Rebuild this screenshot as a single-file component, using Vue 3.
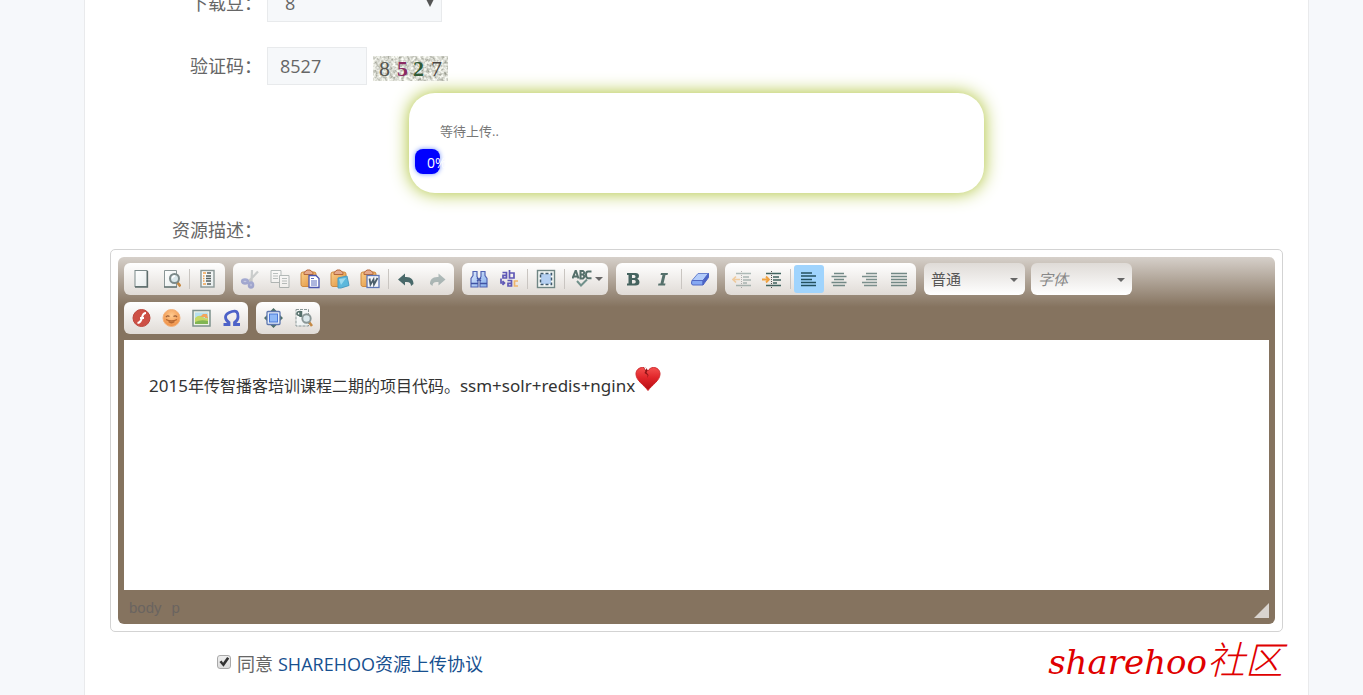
<script setup>
import { ref } from 'vue'

const points = ref('8')
const captcha = ref('8527')
const agreed = ref(true)

const row1 = [
  [{ icon: 'page', label: '新建' }, { icon: 'preview', label: '预览' }, { sep: true }, { icon: 'template', label: '模板' }],
  [
    { icon: 'cut', label: '剪切', off: true },
    { icon: 'copy', label: '复制', off: true },
    { icon: 'paste', label: '粘贴' },
    { icon: 'pastetext', label: '粘贴为无格式文本' },
    { icon: 'pasteword', label: '从 MS Word 粘贴' },
    { sep: true },
    { icon: 'undo', label: '撤消' },
    { icon: 'redo', label: '重做', off: true }
  ],
  [
    { icon: 'find', label: '查找' },
    { icon: 'replace', label: '替换' },
    { sep: true },
    { icon: 'selectall', label: '全选' },
    { sep: true },
    { icon: 'spell', label: '拼写检查', wide: true }
  ],
  [{ icon: 'bold', label: '加粗' }, { icon: 'italic', label: '倾斜' }, { sep: true }, { icon: 'eraser', label: '清除格式' }],
  [
    { icon: 'outdent', label: '减少缩进量', off: true },
    { icon: 'indent', label: '增加缩进量' },
    { sep: true },
    { icon: 'left', label: '左对齐', active: true },
    { icon: 'center', label: '居中' },
    { icon: 'right', label: '右对齐' },
    { icon: 'justify', label: '两端对齐' }
  ]
]
const row2 = [
  [
    { icon: 'flash', label: 'Flash' },
    { icon: 'smiley', label: '表情符' },
    { icon: 'image', label: '图像' },
    { icon: 'omega', label: '特殊符号' }
  ],
  [{ icon: 'maximize', label: '全屏' }, { icon: 'blocks', label: '显示区块' }]
]
const rows = [row1, row2]
</script>

<template>
  <div class="page">
    <svg class="defs" aria-hidden="true">
      <defs>
        <linearGradient id="gPaper" x1="0" y1="0" x2="1" y2="1">
          <stop offset="0" stop-color="#ffffff" />
          <stop offset="1" stop-color="#e6ecec" />
        </linearGradient>
        <linearGradient id="gBoard" x1="0" y1="0" x2="1" y2="1">
          <stop offset="0" stop-color="#fbd08a" />
          <stop offset="1" stop-color="#dd8c38" />
        </linearGradient>
        <linearGradient id="gBlue" x1="0" y1="0" x2="1" y2="1">
          <stop offset="0" stop-color="#dfeafc" />
          <stop offset="1" stop-color="#84aeec" />
        </linearGradient>
        <linearGradient id="gHeart" x1="0" y1="0" x2="0" y2="1">
          <stop offset="0" stop-color="#f4504e" />
          <stop offset="0.45" stop-color="#e0252a" />
          <stop offset="1" stop-color="#b30c12" />
        </linearGradient>
        <radialGradient id="gFace" cx="0.5" cy="0.35" r="0.65">
          <stop offset="0" stop-color="#ffcb90" />
          <stop offset="1" stop-color="#ee8e44" />
        </radialGradient>
        <filter id="grain" x="0" y="0" width="1" height="1">
          <feTurbulence type="fractalNoise" baseFrequency="0.35" numOctaves="2" seed="7" />
          <feColorMatrix values="1.2 0 0 0 0.1  1.2 0 0 0 0.11  1.2 0 0 0 0.05  0 0 0 0 1" />
        </filter>
      </defs>
      <symbol id="page" viewBox="0 0 20 20">
        <rect x="4" y="1.500" width="12" height="16" fill="url(#gPaper)" stroke="#7b8a8a" />
        <path d="M4 18h12.500V2" fill="none" stroke="#5c6c6b" stroke-width="1.300" />
      </symbol>
      <symbol id="preview" viewBox="0 0 20 20">
        <path d="M3.500 1.500h12v16.500h-12z" fill="url(#gPaper)" stroke="#8a9696" />
        <path d="M3 18h13" stroke="#5c6c6b" stroke-width="1.300" />
        <path d="M16 13l3.500 4.500" stroke="#c58a45" stroke-width="2.800" />
        <circle cx="13.500" cy="9.500" r="4.500" fill="#d9e7ea" stroke="#7b8989" stroke-width="2" />
        <path d="M11.500 9.500a2.500 2.500 0 0 1 2.500-2.500" stroke="#fff" stroke-width="1.300" fill="none" />
      </symbol>
      <symbol id="template" viewBox="0 0 20 20">
        <rect x="3" y="1.500" width="13" height="16.500" fill="url(#gPaper)" stroke="#8a9796" stroke-width="1.400" />
        <path d="M5 4h3M5 7h1.500M5 9.500h1.500M5 12h1.500M5 15h3" stroke="#f0a350" stroke-width="1.500" />
        <path d="M9 4h4M8 7h5M8 9.500h5M8 12h5M9 15h4" stroke="#56605f" stroke-width="1.300" />
      </symbol>
      <symbol id="cut" viewBox="0 0 20 20">
        <path d="M18 2.500L8 13M12 1l-.5 12" stroke="#8d9597" stroke-width="2.200" />
        <ellipse cx="5" cy="12.500" rx="2.800" ry="2" fill="#8c98dc" stroke="#3446ad" stroke-width="2.600" />
        <ellipse cx="11" cy="16" rx="2" ry="2.500" fill="#8c98dc" stroke="#3446ad" stroke-width="2.600" />
      </symbol>
      <symbol id="copy" viewBox="0 0 20 20">
        <path d="M1 1.500h10v12H1z" fill="#fff" stroke="#566" />
        <path d="M3 4.500h5M3 7h5M3 9.500h5" stroke="#677" />
        <path d="M9.500 6.500h9.500v12H9.500z" fill="#fff" stroke="#566" />
        <path d="M12 9.500h5M12 12h5M12 14.500h5" stroke="#677" />
      </symbol>
      <symbol id="board" viewBox="0 0 20 20">
        <rect x="1" y="3" width="15" height="14.500" rx="2" fill="url(#gBoard)" stroke="#d08a3e" />
        <path d="M4 5.500V3.500L7 1h3l3 2.500v2z" fill="#e5a98a" stroke="#b5683a" />
      </symbol>
      <symbol id="paste" viewBox="0 0 20 20">
        <use href="#board" />
        <path d="M9 6.500h7l3 3v9H9z" fill="#fff" stroke="#4a56ae" stroke-width="1.300" />
        <path d="M11 9.500h3M11 12h6M11 14h6M11 16h6" stroke="#5b6cbd" />
      </symbol>
      <symbol id="pastetext" viewBox="0 0 20 20">
        <use href="#board" />
        <path d="M8 9l9-2 2 9.500L11 19H8z" fill="#5cb8dc" stroke="#4a9cc2" />
        <path d="M9 10l7-1-5 7z" fill="#9adaee" />
      </symbol>
      <symbol id="pasteword" viewBox="0 0 20 20">
        <use href="#board" />
        <rect x="7" y="6.500" width="12" height="12" fill="#f4f6fb" stroke="#5f78b8" stroke-width="1.300" />
        <path d="M9.500 9.500l1 6 3-5 .5 5 3.500-6.500" fill="none" stroke="#4b5f6c" stroke-width="1.800" />
      </symbol>
      <symbol id="undo" viewBox="0 0 20 20">
        <path d="M1 10.500l7-6v3.500c6-.5 8.500 2.500 8.500 7l-2.500 2c0-3.500-2-4.500-6-4v3.500z" fill="#49696a" />
      </symbol>
      <symbol id="redo" viewBox="0 0 20 20">
        <path d="M18.500 10.500l-7-6v3.500C5.500 7.500 3 10.500 3 15l2.500 2c0-3.500 2-4.500 6-4v3.500z" fill="#49696a" />
      </symbol>
      <symbol id="find" viewBox="0 0 20 20">
        <path d="M4 2.500h4v5l1 2v8.500H2V9.500l2-3zM12 2.500h4v4l2 3V18h-7V9.500l1-2z" fill="url(#gBlue)" stroke="#5365b4" stroke-width="1.200" />
        <path d="M8 9l4 3M8 12l4-3M2 14.500h7M11 14.500h7" stroke="#4053a4" stroke-width="1.500" />
      </symbol>
      <symbol id="replace" viewBox="0 0 20 20">
        <g fill="none" stroke="#5f58b6" stroke-width="1.700">
          <path d="M3.500 3.500h4v5.500H4V6.300h3.500M10.500 1v8H15V4h-4.500" />
          <path d="M8.500 11.500h4v5.500H9v-2.700h3.500M2 9.500v4.500h4M3.500 12l2 2-2 2" />
        </g>
        <path d="M19 12h-3.500v5H19" fill="none" stroke="#efb56c" stroke-width="1.700" />
      </symbol>
      <symbol id="selectall" viewBox="0 0 20 20">
        <rect x="1.500" y="1.500" width="17" height="17" fill="#f3f7f5" stroke="#708684" stroke-width="1.400" />
        <rect x="5" y="5" width="10" height="10" fill="#b5d0f2" />
        <rect x="4.500" y="4.500" width="11" height="11" fill="none" stroke="#40596c" stroke-width="1.500" stroke-dasharray="3 2" />
      </symbol>
      <symbol id="spell" viewBox="0 0 20 20">
        <g fill="none" stroke="#55706b" stroke-width="2">
          <path d="M.5 9.500L3.500 2h.5l2.500 7.500M1.500 7.500h4M8.500 2v7.500M7.500 2h3.500q2.500 1.700 0 3.500H8.500H11q2.500 2 0 4H7.500M19.500 2.500H16q-2 0-2 3.300t2 3.400h3.500" />
          <path d="M5 12l4 4.500 6-6" stroke="#71918b" />
        </g>
      </symbol>
      <symbol id="bold" viewBox="0 0 20 20">
        <path fill-rule="evenodd" d="M4 4h8.500q3.500 0 3.500 3 0 2-1.800 2.800Q16.500 10.500 16.500 13q0 3.500-4 3.500H4v-2h1.500V6H4zm5 2v3h2q1.500 0 1.500-1.500T11 6zm0 5v3.500h2.200q1.600 0 1.600-1.700T11.200 11z" fill="#45635f" />
      </symbol>
      <symbol id="italic" viewBox="0 0 20 20">
        <path d="M8 4h7l-.5 2h-2l-2 8.500h2l-.5 2H5l.5-2h2l2-8.500h-2z" fill="#55706b" />
      </symbol>
      <symbol id="eraser" viewBox="0 0 20 20">
        <path d="M8 4.500h10.500L13 11.500H2z" fill="#b3ccfa" stroke="#6a83cf" />
        <path d="M2 11.500h11v4.500H3q-1.500 0-1.500-2z" fill="#86a8f2" stroke="#5069c5" />
        <path d="M13 11.500l5.500-7v4L13 16z" fill="#4a63c6" stroke="#4c64c4" />
      </symbol>
      <symbol id="outdent" viewBox="0 0 20 20">
        <path d="M4 4.500h15M11 8h6M11 11h8M11 14h4M4 16.500h15" stroke="#40635f" stroke-width="1.500" />
        <path d="M9.500 2v17" stroke="#555" stroke-dasharray="1 1" />
        <path d="M8 10.500H1M4 7.500l-3 3 3 3" fill="none" stroke="#ef9a31" stroke-width="1.700" />
      </symbol>
      <symbol id="indent" viewBox="0 0 20 20">
        <path d="M4 4.500h15M11 8h6M11 11h8M11 14h4M4 16.500h15" stroke="#40635f" stroke-width="1.500" />
        <path d="M9.500 2v17" stroke="#555" stroke-dasharray="1 1" />
        <path d="M0 10.500h7M4 7.500l3 3-3 3" fill="none" stroke="#efa140" stroke-width="1.800" />
      </symbol>
      <symbol id="left" viewBox="0 0 20 20">
        <path d="M2 4h11M2 7h15M2 10.500h11M2 13.500h15M2 16.500h15" stroke="#23505f" stroke-width="1.500" />
      </symbol>
      <symbol id="center" viewBox="0 0 20 20">
        <path d="M5 4.500h10M2.500 7.500h15M5 10.500h10M2.500 13.500h15M4 16.500h12" stroke="#728885" stroke-width="1.500" />
      </symbol>
      <symbol id="right" viewBox="0 0 20 20">
        <path d="M7 4.500h11M3 7.500h15M7 10.500h11M3 13.500h15M5 16.500h13" stroke="#7b8f8c" stroke-width="1.500" />
      </symbol>
      <symbol id="justify" viewBox="0 0 20 20">
        <path d="M2 4.500h16M2 7.500h16M2 10.500h16M2 13.500h16M2 16.500h16" stroke="#728885" stroke-width="1.700" />
      </symbol>
      <symbol id="flash" viewBox="0 0 20 20">
        <circle cx="10.500" cy="10" r="8.500" fill="#cd5045" stroke="#bc463c" />
        <path d="M15 5q-3 0-4 4.500-1 5-4.500 5.500M9 10h4" fill="none" stroke="#fff" stroke-width="2" />
      </symbol>
      <symbol id="smiley" viewBox="0 0 20 20">
        <circle cx="10.500" cy="10" r="8.500" fill="url(#gFace)" stroke="#f3b27a" />
        <path d="M5 9q1.500-2 3.500-.5M12.500 8.500q2-1.500 3.500.5" fill="none" stroke="#9b5f38" stroke-width="1.300" />
        <path d="M5 11.500q5.500 3 11 0M7.500 13.500q3 2.500 6 0" fill="none" stroke="#b5662f" stroke-width="1.300" />
      </symbol>
      <symbol id="image" viewBox="0 0 20 20">
        <rect x="2" y="2.500" width="17" height="15.500" fill="#eef2e6" stroke="#7d918c" stroke-width="1.500" />
        <path d="M4 4.500h13v8H4z" fill="#b7e0ee" />
        <path d="M4 10q4-4 8-1t5 0v7H4z" fill="#c5d865" />
        <path d="M4 14q6-3 13-1v3H4z" fill="#80b553" />
        <path d="M9 9l3-3h4l1 4h-3V9z" fill="#f2a65a" />
      </symbol>
      <symbol id="omega" viewBox="0 0 20 20">
        <path d="M2.500 16.500H8v-2Q4.500 12.500 4.500 9T11 3.500 17 9q0 3.500-3.500 5.500v2H19" fill="none" stroke="#4d62c8" stroke-width="2.800" />
      </symbol>
      <symbol id="maximize" viewBox="0 0 20 20">
        <path d="M10.500 0l3 3h-6zM10.500 20l3-3h-6zM1 10l3-3v6zM20 10l-3-3v6z" fill="#4d6f68" />
        <rect x="4" y="3.500" width="13" height="13" rx="1" fill="#e6eefa" stroke="#5f77ae" stroke-width="1.300" />
        <rect x="6.500" y="6" width="8" height="8" fill="#8fb8f6" stroke="#4b78d8" />
      </symbol>
      <symbol id="blocks" viewBox="0 0 20 20">
        <path d="M3 1.500h12.500V18H3z" fill="url(#gPaper)" stroke="#8a9696" stroke-dasharray="3 1" />
        <path d="M8.500 3v6M7 9V3.500Q4 3.500 4 5.500t3 2" fill="none" stroke="#55706b" stroke-width="1.500" />
        <path d="M16 14l3 4" stroke="#c58a45" stroke-width="2.600" />
        <circle cx="13.500" cy="10.500" r="4.200" fill="#dce9ec" stroke="#8a9797" stroke-width="1.900" />
      </symbol>
    </svg>

    <main class="card">
      <div class="row">
        <label class="label" for="points">下载豆：</label>
        <span class="pick">
          <select id="points" v-model="points" class="field points">
            <option>8</option>
          </select>
          <span class="tri"></span>
        </span>
      </div>
      <div class="row code-row">
        <label class="label" for="captcha">验证码：</label>
        <input id="captcha" v-model="captcha" class="field code" type="text" />
        <svg class="captcha" viewBox="0 0 75 25" role="img" aria-label="8527">
          <rect width="75" height="25" fill="#c9cbbf" />
          <rect width="75" height="25" filter="url(#grain)" />
          <text x="6" y="20" fill="#55564f">8</text>
          <text x="24" y="20" fill="#8a2a62" class="strong">5</text>
          <text x="40" y="20" fill="#2f5a35" class="strong">2</text>
          <text x="58" y="20" fill="#4b4540">7</text>
        </svg>
      </div>

      <section class="upload">
        <p class="wait">等待上传..</p>
        <div class="bar">0%</div>
      </section>

      <div class="row desc-row"><span id="desc" class="label">资源描述：</span></div>

      <div class="editor">
        <div class="chrome">
          <div class="toolbar">
            <div v-for="(row, r) in rows" :key="r" class="tools">
              <div v-for="(group, g) in row" :key="g" class="group">
                <template v-for="(t, i) in group" :key="i">
                  <span v-if="t.sep" class="sep"></span>
                  <button
                    v-else
                    type="button"
                    class="tool"
                    :class="{ active: t.active, off: t.off, wide: t.wide }"
                    :title="t.label"
                    :aria-label="t.label"
                  >
                    <svg class="icon"><use :href="'#' + t.icon" /></svg>
                    <span v-if="t.wide" class="caret"></span>
                  </button>
                </template>
              </div>
              <div v-if="r === 0" class="combos">
                <span class="combo">
                  <select aria-label="格式"><option>普通</option></select>
                  <span class="caret"></span>
                </span>
                <span class="combo">
                  <select class="muted" aria-label="字体"><option>字体</option></select>
                  <span class="caret"></span>
                </span>
              </div>
            </div>
          </div>
          <div class="content" contenteditable="true" role="textbox" aria-labelledby="desc">
            <p><span class="latin">2015</span>年传智播客培训课程二期的项目代码。<span class="latin">ssm+solr+redis+nginx</span><svg class="heart" viewBox="0 0 26 26">
              <path d="M13 24.500C9 19 1 14.500 1 8 1 4 4 1.500 7.500 1.500c2.500 0 4.500 1.500 5.500 3.500 1-2 3-3.500 5.500-3.500C22 1.500 25 4 25 8c0 6.500-8 11-12 16.500z" fill="url(#gHeart)" stroke="#d0282c" />
              <path d="M8.500 1l2 4-1 2 3 2 0 3 1-3-2-2.500 1-2L11 2z" fill="#8d1417" />
              <path d="M8.500 0l3 2.500-1 1.500z" fill="#fff" />
            </svg></p>
          </div>
          <div class="status">
            <a href="#body">body</a>
            <a href="#p">p</a>
            <span class="grip"></span>
          </div>
        </div>
      </div>

      <footer class="foot">
        <input id="agree" v-model="agreed" type="checkbox" />
        <label for="agree">同意</label>
        <a class="terms" href="#terms">SHAREHOO资源上传协议</a>
        <span class="mark">sharehoo<span class="mark-cn">社区</span></span>
      </footer>
    </main>
  </div>
</template>

<style>
body {
  background: #f6f8fb;
}
</style>

<style scoped>
.page {
  display: flex;
  flex-direction: column;
  min-height: 100vh;
  overflow: hidden;
  background: #f6f8fb;
  color: #666;
  font: 18px/24px "Open Sans", "Noto Sans CJK SC", sans-serif;
}
.page * {
  box-sizing: border-box;
}
.defs {
  position: absolute;
  width: 0;
  height: 0;
}
.card {
  flex: 1;
  margin: -16px 54px 0 84px;
  padding: 0 25px;
  background: #fff;
  border: solid #e9eaec;
  border-width: 0 1px;
}
.row {
  display: flex;
  align-items: center;
  gap: 5px;
}
.label {
  width: 152px;
  text-align: right;
  white-space: nowrap;
}
.field {
  height: 38px;
  margin: 0;
  padding: 0 12px;
  border: 1px solid #e8eaec;
  border-radius: 0;
  background: #f6f8fa;
  color: #666;
  font: inherit;
  appearance: none;
}
.pick {
  position: relative;
}
.points {
  display: block;
  width: 175px;
  padding-left: 17px;
}
.tri {
  position: absolute;
  top: 15px;
  right: 8px;
  border: solid transparent;
  border-width: 8px 4px 0;
  border-top-color: #555;
  pointer-events: none;
}
.code-row {
  margin-top: 25px;
}
.code {
  width: 100px;
}
.captcha {
  width: 75px;
  height: 25px;
  margin: 5px 0 0 1px;
  font: 22px "Liberation Serif", serif;
}
.strong {
  font-weight: 700;
}
.upload {
  width: 575px;
  max-width: 100%;
  height: 100px;
  margin: 8px auto 0;
  padding: 28px 6px 0;
  border-radius: 26px;
  box-shadow: 0 0 18px #a9bf2c;
  color: #777;
  font-size: 13px;
}
.wait {
  margin: 0 0 8px 25px;
  line-height: 20px;
}
.bar {
  width: 25px;
  height: 25px;
  padding-left: 12px;
  border-radius: 8px;
  background: #00f;
  box-shadow: 0 0 5px #6d8cff;
  color: #fff;
  font-size: 14px;
  line-height: 27px;
}
.desc-row {
  margin-top: 25px;
}
.editor {
  margin-top: 7px;
  padding: 7px;
  border: 1px solid #d3d3d3;
  border-radius: 5px;
}
.chrome {
  padding: 6px 6px 0;
  border-radius: 6px;
  background: #85735f linear-gradient(#d6d0ca, #85735f) no-repeat 0 0 / 100% 50px;
}
.toolbar {
  display: flex;
  flex-direction: column;
  gap: 7px;
  padding-bottom: 6px;
}
.tools {
  display: flex;
  gap: 8px;
}
.group {
  display: flex;
  align-items: center;
  height: 32px;
  padding: 0 2px;
  border-radius: 6px;
  background: linear-gradient(#fff, #e0dbd6);
}
.tool {
  display: flex;
  align-items: center;
  justify-content: center;
  width: 30px;
  height: 28px;
  padding: 0;
  border: 0;
  border-radius: 3px;
  background: none;
}
.wide {
  gap: 3px;
  width: 38px;
}
.active {
  background: #a0d4fd;
}
.off .icon {
  opacity: 0.4;
}
.icon {
  width: 20px;
  height: 20px;
}
.sep {
  width: 1px;
  height: 20px;
  margin: 0 3px;
  background: #c9c5c1;
}
.caret {
  border: solid transparent;
  border-width: 4px 4px 0;
  border-top-color: #666;
  pointer-events: none;
}
.combos {
  display: flex;
  gap: 6px;
}
.combo {
  position: relative;
}
.combo select {
  width: 101px;
  height: 32px;
  padding: 0 7px;
  border: 0;
  border-radius: 6px;
  background: linear-gradient(#dfdbd7, #fff);
  color: #555;
  font: 15px "Open Sans", "Noto Sans CJK SC", sans-serif;
  appearance: none;
}
.combo .muted {
  color: #888;
  font-style: italic;
}
.combo .caret {
  position: absolute;
  top: 15px;
  right: 7px;
}
.content {
  min-height: 250px;
  padding: 26px 25px 24px;
  background: #fff;
  color: #333;
  font: 16px/26px "Noto Sans", "Noto Sans CJK SC", sans-serif;
}
.content p {
  margin: 0;
}
.latin {
  font-size: 17px;
}
.heart {
  width: 26px;
  height: 26px;
}
.status {
  display: flex;
  align-items: center;
  gap: 10px;
  height: 34px;
  padding-left: 5px;
  font: 15px "Liberation Sans", sans-serif;
}
.status a {
  color: #6a645f;
  text-decoration: none;
}
.grip {
  width: 15px;
  height: 15px;
  margin: 7px 0 0 auto;
  background: #d9d4cf;
  clip-path: polygon(100% 0, 100% 100%, 0 100%);
}
.foot {
  display: flex;
  align-items: center;
  height: 48px;
  margin-top: 8px;
  padding-left: 107px;
}
.foot input {
  position: relative;
  width: 14px;
  height: 14px;
  margin: 0 6px 4px 0;
  border: 1px solid #a9a9a9;
  border-radius: 3px;
  background: linear-gradient(#eee, #dcdcdc);
  appearance: none;
}
.foot input:checked::before {
  content: "";
  display: block;
  height: 12px;
  background: #333;
  clip-path: polygon(12% 50%, 30% 38%, 42% 56%, 76% 8%, 94% 20%, 46% 90%);
}
.terms {
  margin-left: 5px;
  color: #17508f;
  text-decoration: none;
}
.mark {
  height: 48px;
  margin-left: auto;
  color: #e00000;
  font: italic 34px/36px "DejaVu Serif", serif;
  white-space: nowrap;
}
.mark-cn {
  font: italic 300 38px/36px "Noto Sans CJK SC", sans-serif;
}
</style>
